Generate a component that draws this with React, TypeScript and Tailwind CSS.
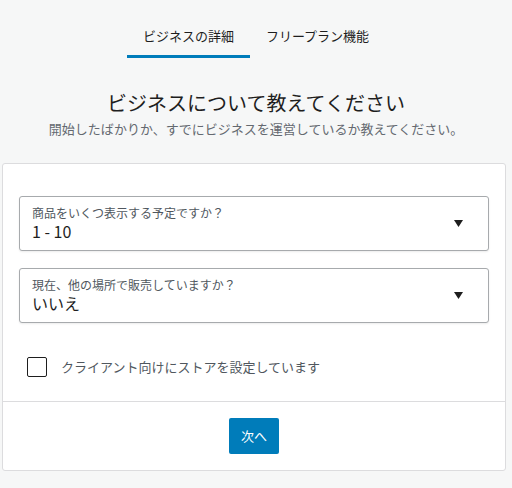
import React from "react";

const FONT = { fontFamily: '"Noto Sans CJK JP", "Noto Sans", sans-serif' };

const SelectBox = ({ label, value }: { label: string; value: string }) => (
  <div className="flex h-[55px] items-center justify-between rounded-[3px] border border-[#a7aaad] bg-white pl-3 pr-[25px] shadow-[0_1px_2px_rgba(0,0,0,0.08)]">
    <div className="mt-[-2px] flex flex-col">
      <span className="text-[12px] leading-4 text-[#50575e]">{label}</span>
      <span className="text-[16px] leading-5 text-[#1e1e1e]">{value}</span>
    </div>
    <svg width="9" height="7" viewBox="0 0 9 7">
      <path d="M0 0h9L4.5 7z" fill="#1e1e1e" />
    </svg>
  </div>
);

const App = () => {
  const [isClient, setIsClient] = React.useState(false);

  return (
    <div className="min-h-[488px] w-[512px] bg-[#f6f7f7]" style={FONT}>
      <nav className="flex justify-center">
        <div className="border-b-[3px] border-[#007cba] px-4 pb-[9px] pt-[26px] text-[13px] leading-5 text-[#1e1e1e]">
          ビジネスの詳細
        </div>
        <div className="border-b-[3px] border-transparent px-4 pb-[9px] pt-[26px] text-[13px] leading-5 text-[#1e1e1e]">
          フリープラン機能
        </div>
      </nav>

      <div className="mt-[31px] text-center">
        <h1 className="text-[20px] leading-7 text-[#1e1e1e]">ビジネスについて教えてください</h1>
        <p className="mt-[2px] text-[13px] leading-5 text-[#646970]">
          開始したばかりか、すでにビジネスを運営しているか教えてください。
        </p>
      </div>

      <div className="ml-[2px] mt-[24px] w-[504px] rounded-[3px] border border-[#dcdcde] bg-white">
        <div className="flex flex-col px-4 pb-6 pt-8">
          <SelectBox label="商品をいくつ表示する予定ですか？" value="1 - 10" />
          <div className="mt-[17px]">
            <SelectBox label="現在、他の場所で販売していますか？" value="いいえ" />
          </div>
          <label className="ml-2 mt-[34px] flex items-center gap-[14px] cursor-pointer">
            <span
              onClick={() => setIsClient(!isClient)}
              className={`h-5 w-5 rounded-[2px] border border-[#1e1e1e] ${isClient ? "bg-[#007cba]" : "bg-white"}`}
            />
            <span className="text-[13px] leading-5 text-[#50575e]">
              クライアント向けにストアを設定しています
            </span>
          </label>
        </div>
        <div className="flex justify-center border-t border-[#dcdcde] pb-4 pt-4">
          <button className="h-9 w-[50px] rounded-[2px] bg-[#007cba] text-[13px] text-white">次へ</button>
        </div>
      </div>
    </div>
  );
};

export default App;
